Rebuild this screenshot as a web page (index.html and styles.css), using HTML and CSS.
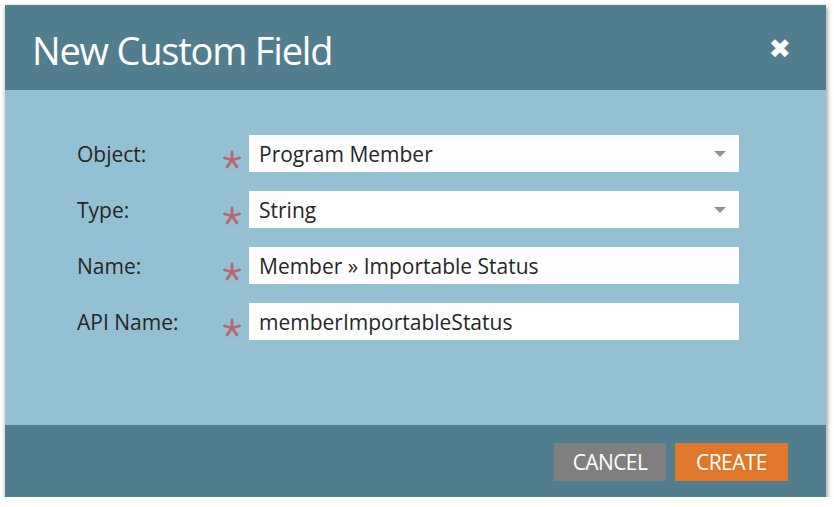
FILE: index.html
```html
<!DOCTYPE html>
<html>
<head>
<meta charset="utf-8">
<link rel="stylesheet" href="styles.css">
</head>
<body>
<div class="dialog">
  <div class="header">
    <h1 class="title">New Custom Field</h1>
    <span class="close">&#x2716;</span>
  </div>
  <div class="content">
    <div class="row">
      <label class="label">Object:</label>
      <span class="req"><svg viewBox="0 0 20 20" width="20" height="20"><g stroke="#b8676b" stroke-width="2.8" stroke-linecap="round"><line x1="10" y1="10" x2="10" y2="2"/><line x1="10" y1="10" x2="2.5" y2="8"/><line x1="10" y1="10" x2="17.5" y2="8"/><line x1="10" y1="10" x2="5" y2="17"/><line x1="10" y1="10" x2="15" y2="17"/></g></svg></span>
      <div class="field select">Program Member<span class="arrow"></span></div>
    </div>
    <div class="row">
      <label class="label">Type:</label>
      <span class="req"><svg viewBox="0 0 20 20" width="20" height="20"><g stroke="#b8676b" stroke-width="2.8" stroke-linecap="round"><line x1="10" y1="10" x2="10" y2="2"/><line x1="10" y1="10" x2="2.5" y2="8"/><line x1="10" y1="10" x2="17.5" y2="8"/><line x1="10" y1="10" x2="5" y2="17"/><line x1="10" y1="10" x2="15" y2="17"/></g></svg></span>
      <div class="field select">String<span class="arrow"></span></div>
    </div>
    <div class="row">
      <label class="label">Name:</label>
      <span class="req"><svg viewBox="0 0 20 20" width="20" height="20"><g stroke="#b8676b" stroke-width="2.8" stroke-linecap="round"><line x1="10" y1="10" x2="10" y2="2"/><line x1="10" y1="10" x2="2.5" y2="8"/><line x1="10" y1="10" x2="17.5" y2="8"/><line x1="10" y1="10" x2="5" y2="17"/><line x1="10" y1="10" x2="15" y2="17"/></g></svg></span>
      <div class="field">Member » Importable Status</div>
    </div>
    <div class="row">
      <label class="label">API Name:</label>
      <span class="req"><svg viewBox="0 0 20 20" width="20" height="20"><g stroke="#b8676b" stroke-width="2.8" stroke-linecap="round"><line x1="10" y1="10" x2="10" y2="2"/><line x1="10" y1="10" x2="2.5" y2="8"/><line x1="10" y1="10" x2="17.5" y2="8"/><line x1="10" y1="10" x2="5" y2="17"/><line x1="10" y1="10" x2="15" y2="17"/></g></svg></span>
      <div class="field">memberImportableStatus</div>
    </div>
  </div>
  <div class="footer">
    <button class="btn cancel">CANCEL</button>
    <button class="btn create">CREATE</button>
  </div>
</div>
</body>
</html>
```
FILE: styles.css
```css
html, body { margin: 0; padding: 0; background: #ffffff; }
body { padding: 5px 0 0 5px; font-family: "Open Sans", sans-serif; }
.dialog {
  width: 821px;
  height: 492px;
  display: flex;
  flex-direction: column;
  box-shadow: 1px 2px 5px rgba(0,0,0,0.45);
}
.header {
  height: 85px;
  background: #507e8f;
  display: flex;
  align-items: center;
  justify-content: space-between;
  padding: 0 35px 0 27px;
  box-sizing: border-box;
}
.title {
  margin: 0;
  color: #fff;
  font-weight: 400;
  font-size: 38px;
  letter-spacing: -1.2px;
  line-height: 1;
  padding-top: 4px;
}
.close {
  color: #fff;
  font-family: "DejaVu Sans", sans-serif;
  font-size: 27px;
  font-weight: bold;
  padding-top: 2px;
}
.content {
  flex: 1;
  background: #93c1d3;
  padding: 45px 0 0 72px;
  display: flex;
  flex-direction: column;
  gap: 19px;
}
.row { display: flex; align-items: center; height: 37px; }
.label {
  width: 145px;
  font-size: 21px;
  color: #262626;
}
.req {
  width: 27px;
  height: 37px;
  display: flex;
  align-items: flex-end;
  padding-bottom: 2px;
  box-sizing: border-box;
}
.req svg { display: block; }
.field {
  width: 490px;
  height: 37px;
  background: #fff;
  box-sizing: border-box;
  padding-left: 10px;
  font-size: 21px;
  color: #262626;
  display: flex;
  align-items: center;
  position: relative;
}
.arrow {
  position: absolute;
  right: 13px;
  top: 16px;
  width: 0; height: 0;
  border-left: 6px solid transparent;
  border-right: 6px solid transparent;
  border-top: 6px solid #909090;
}
.footer {
  height: 72px;
  background: #507e8f;
  display: flex;
  justify-content: flex-end;
  align-items: center;
  gap: 9px;
  padding: 2px 38px 0 0;
  box-sizing: border-box;
}
.btn {
  border: 0;
  height: 38px;
  width: 112px;
  color: #fff;
  font-family: "Open Sans", sans-serif;
  font-size: 21px;
  letter-spacing: -0.6px;
  padding: 0;
}
.cancel { background: #7f7f7f; }
.create { background: #e0772b; width: 113px; }
```
